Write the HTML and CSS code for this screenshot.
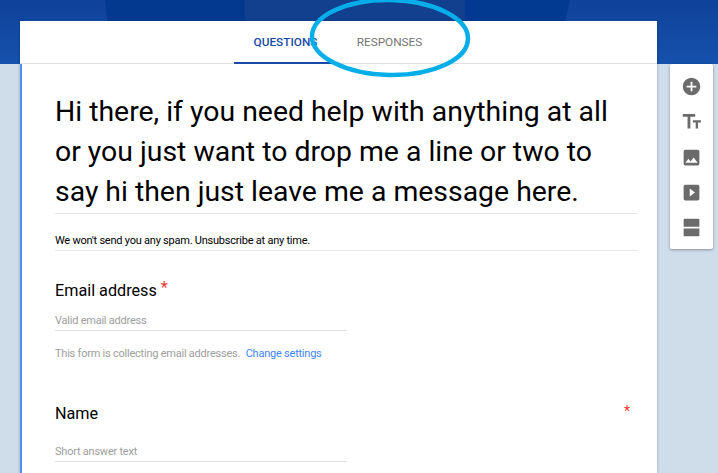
FILE: index.html
```html
<!DOCTYPE html>
<html lang="en">
<head>
  <meta charset="UTF-8" />
  <meta name="viewport" content="width=device-width, initial-scale=1.0" />
  <title>Contact form</title>
  <link rel="stylesheet" href="styles.css">
</head>
<body>
  <div class="banner">
    <svg class="banner-art" viewBox="0 0 718 64" preserveAspectRatio="none" aria-hidden="true">
      <defs>
        <linearGradient id="bannerSide" x1="0" y1="0" x2="0" y2="1">
          <stop offset="0" stop-color="#0f4299" />
          <stop offset="1" stop-color="#1651ad" />
        </linearGradient>
      </defs>
      <rect width="718" height="64" fill="#0a3f97" />
      <polygon points="0,0 105,0 112,64 0,64" fill="url(#bannerSide)" />
      <polygon points="105,0 245,0 245,64 112,64" fill="#03398f" />
      <polygon points="245,0 465,0 465,64 245,64" fill="#123f8e" />
      <polygon points="465,0 570,0 555,64 465,64" fill="#023a91" />
      <polygon points="570,0 718,0 718,64 555,64" fill="url(#bannerSide)" />
    </svg>
  </div>

  <div class="page">
    <main class="card">
      <nav class="tabs">
        <a class="tab active">QUESTIONS</a>
        <a class="tab">RESPONSES</a>
      </nav>

      <div class="form-body">
        <h1 class="form-title">Hi there, if you need help with anything at all or you just want to drop me a line or two to say hi then just leave me a message here.</h1>
        <p class="form-desc">We won't send you any spam. Unsubscribe at any time.</p>

        <section class="question email-question">
          <h2 class="question-label">Email address <span class="req">*</span></h2>
          <div class="answer">Valid email address</div>
          <p class="collect-note">This form is collecting email addresses. <a class="link">Change settings</a></p>
        </section>

        <section class="question name-question">
          <div class="question-head">
            <h2 class="question-label">Name</h2>
            <span class="req req-right">*</span>
          </div>
          <div class="answer">Short answer text</div>
        </section>
      </div>
    </main>

    <aside class="toolbar">
      <svg class="tool" viewBox="0 0 24 24"><path d="M12 2a10 10 0 1 0 0 20 10 10 0 0 0 0-20zm5.500 11H13v4.500h-2V13H6.500v-2H11V6.500h2V11h4.500z" /></svg>
      <svg class="tool" viewBox="0 0 24 24"><path d="M2 3.500v3h5.500V20h3.200V6.500h5.500v-3zM13.500 10.500V13h3.300v7h2.700v-7h3.300v-2.500z" /></svg>
      <svg class="tool" viewBox="0 0 24 24"><path d="M21 19V5a2 2 0 0 0-2-2H5a2 2 0 0 0-2 2v14a2 2 0 0 0 2 2h14a2 2 0 0 0 2-2zM8.500 13.500l2.500 3 3.500-4.500 4.500 6H5z" /></svg>
      <svg class="tool" viewBox="0 0 24 24"><path d="M19 3H5a2 2 0 0 0-2 2v14a2 2 0 0 0 2 2h14a2 2 0 0 0 2-2V5a2 2 0 0 0-2-2zM10 16.500v-9l6 4.500z" /></svg>
      <svg class="tool" viewBox="0 0 24 24"><path d="M4 2h16a1 1 0 0 1 1 1v8H3V3a1 1 0 0 1 1-1zM3 13h18v8a1 1 0 0 1-1 1H4a1 1 0 0 1-1-1z" /></svg>
    </aside>
  </div>

  <svg class="circle-note" viewBox="0 0 164 80" aria-hidden="true">
    <ellipse cx="82" cy="39.500" rx="78" ry="37.500" transform="rotate(1 82 39)" />
  </svg>
</body>
</html>
```

FILE: styles.css
```css
html,
body {
  height: 100%;
}

body {
  font-family: Roboto, "Liberation Sans", sans-serif;
  background-color: #cfdcea;
  margin: 0;
  padding: 0;
  overflow: hidden;
  color: #000;
}

.banner {
  height: 64px;
}

.banner-art {
  display: block;
  width: 100%;
  height: 100%;
}

.page {
  display: flex;
  align-items: flex-start;
  margin-top: -43px;
  padding-left: 20px;
}

.card {
  width: 637px;
  height: 452px;
  flex-shrink: 0;
  background: white;
  box-shadow: 0 1px 3px rgba(0, 0, 0, 0.25);
}

.tabs {
  display: flex;
  justify-content: center;
  height: 42px;
  padding-right: 2px;
  border-bottom: 1px solid #e0e0e0;
}

.tab {
  width: 104px;
  margin-bottom: -1px;
  text-align: center;
  font-size: 11.800px;
  line-height: 42px;
  color: #757575;
}

.tab.active {
  font-weight: 500;
  color: #1a4aa8;
  border-bottom: 2px solid #1a4aa8;
  height: 41px;
}

.form-body {
  box-sizing: border-box;
  height: 409px;
  overflow: hidden;
  border-left: 2px solid #4d8ef5;
  padding: 28px 20px 0 33px;
}

.form-title {
  margin: 0;
  font-size: 28.400px;
  font-weight: 400;
  line-height: 40px;
  padding-bottom: 1px;
  border-bottom: 1px solid #e4e4e4;
}

.form-desc {
  margin: 0;
  font-size: 11px;
  letter-spacing: -0.230px;
  line-height: 16px;
  padding: 19px 0 1px;
  border-bottom: 1px solid #e8e8e8;
}

.question-label {
  margin: 0;
  font-size: 16.200px;
  font-weight: 400;
  line-height: 22px;
}

.req {
  color: #e53935;
}

.question-label .req {
  line-height: 0;
  vertical-align: 3px;
}

.question-head {
  display: flex;
  justify-content: space-between;
}

.req-right {
  font-size: 14px;
  line-height: 16px;
  margin-right: 7px;
}

.answer {
  width: 292px;
  margin-top: 11px;
  font-size: 11px;
  letter-spacing: -0.230px;
  line-height: 16px;
  color: #9e9e9e;
  padding-bottom: 1px;
  border-bottom: 1px solid #e0e0e0;
}

.email-question {
  padding-top: 29px;
}

.name-question {
  padding-top: 41px;
}

.name-question .answer {
  margin-top: 19px;
}

.collect-note {
  margin: 15px 0 0;
  font-size: 11px;
  letter-spacing: -0.230px;
  line-height: 16px;
  color: #9e9e9e;
}

.link {
  margin-left: 3px;
  color: #4285f4;
}

.toolbar {
  width: 43px;
  height: 185px;
  margin: 43px 0 0 13px;
  flex-shrink: 0;
  display: flex;
  flex-direction: column;
  align-items: center;
  gap: 14.250px;
  padding-top: 12px;
  box-sizing: border-box;
  background: white;
  border-radius: 2px;
  box-shadow: 0 1px 3px rgba(0, 0, 0, 0.35);
}

.tool {
  width: 21px;
  height: 21px;
  flex-shrink: 0;
  fill: #6b6b6b;
}

/* hand drawn annotation over the tabs */
.circle-note {
  position: absolute;
  left: 308px;
  top: -2px;
  width: 164px;
  height: 80px;
  fill: none;
  stroke: #05ade9;
  stroke-width: 4.500;
}
```
